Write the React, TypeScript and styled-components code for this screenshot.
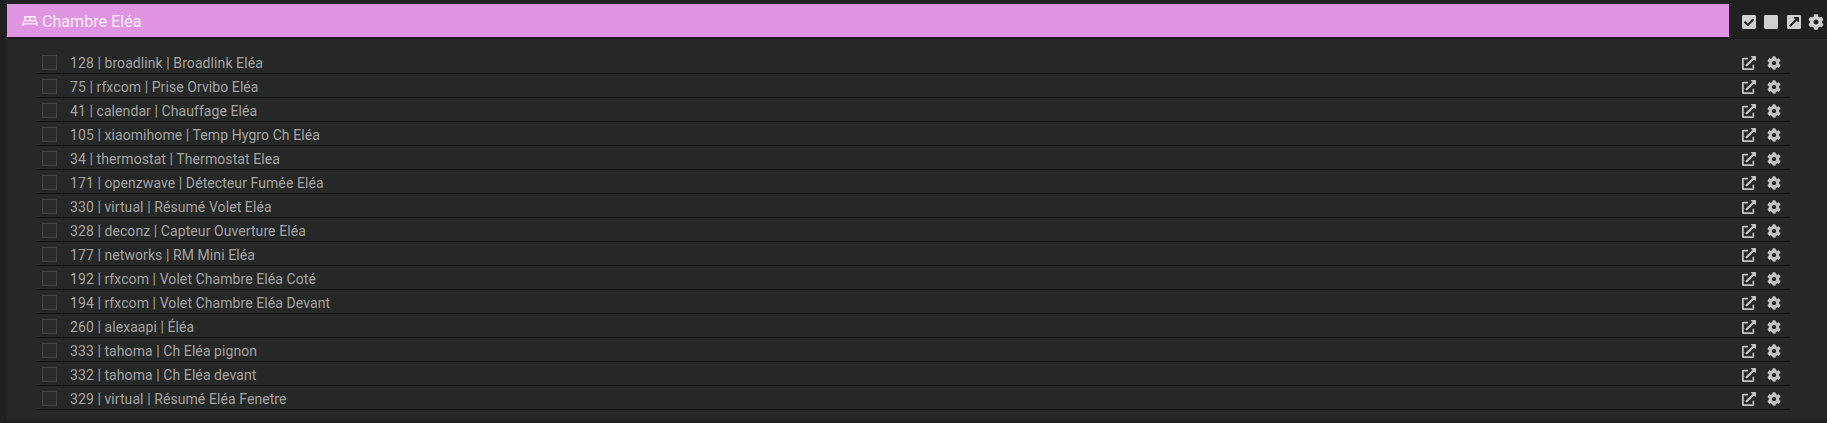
import styled, { createGlobalStyle } from "styled-components";
import { FaCheckSquare, FaCog, FaExternalLinkAlt, FaExternalLinkSquareAlt, FaSquare } from "react-icons/fa";

const eqLogics = [
  "128 | broadlink | Broadlink Eléa",
  "75 | rfxcom | Prise Orvibo Eléa",
  "41 | calendar | Chauffage Eléa",
  "105 | xiaomihome | Temp Hygro Ch Eléa",
  "34 | thermostat | Thermostat Elea",
  "171 | openzwave | Détecteur Fumée Eléa",
  "330 | virtual | Résumé Volet Eléa",
  "328 | deconz | Capteur Ouverture Eléa",
  "177 | networks | RM Mini Eléa",
  "192 | rfxcom | Volet Chambre Eléa Coté",
  "194 | rfxcom | Volet Chambre Eléa Devant",
  "260 | alexaapi | Éléa",
  "333 | tahoma | Ch Eléa pignon",
  "332 | tahoma | Ch Eléa devant",
  "329 | virtual | Résumé Eléa Fenetre",
];

function App() {
  return (
    <>
      <GlobalStyle />
      <Page>
        <HeaderRow>
          <Title>
            <BedIcon viewBox="0 0 16 12">
              <path
                d="M3 1h10a1 1 0 0 1 1 1v3l1.5 2.5V11h-1.6V9.6H2.1V11H.5V7.5L2 5V2a1 1 0 0 1 1-1zm.6 1.5V5h3.6V2.5zm5.2 0V5h3.6V2.5zM2 6.6v1.6h12V6.6z"
                fill="currentColor"
                fillRule="evenodd"
              />
            </BedIcon>
            Chambre Eléa
          </Title>
          <HeaderActions>
            <FaCheckSquare />
            <FaSquare />
            <FaExternalLinkSquareAlt />
            <FaCog />
          </HeaderActions>
        </HeaderRow>
        <Panel>
          <List>
            {eqLogics.map((item) => (
              <Row key={item}>
                <Check />
                <Label>{item}</Label>
                <RowActions>
                  <FaExternalLinkAlt />
                  <FaCog />
                </RowActions>
              </Row>
            ))}
          </List>
        </Panel>
      </Page>
    </>
  );
}

export default App;

const GlobalStyle = createGlobalStyle`
  html, body {
    margin: 0;
    background: #1f2020;
  }
`;

const Page = styled.div`
  width: 1827px;
  height: 423px;
  overflow: hidden;
  padding: 4px 0 0 7px;
  box-sizing: border-box;
  font-family: Roboto, sans-serif;
`;

const HeaderRow = styled.div`
  display: flex;
  align-items: center;
  height: 34px;
  border-bottom: 1px solid #191a1a;
`;

const Title = styled.div`
  width: 1722px;
  height: 34px;
  box-sizing: border-box;
  display: flex;
  align-items: center;
  gap: 4px;
  padding: 1px 0 0 15px;
  background: #e095e2;
  border-bottom: 1px solid #2e1430;
  color: #fbeefb;
  font-size: 16px;
  letter-spacing: 0.06px;
`;

const BedIcon = styled.svg`
  width: 16px;
  height: 12px;
`;

const HeaderActions = styled.div`
  display: flex;
  align-items: center;
  gap: 6px;
  margin-left: 12px;
  padding-top: 1px;
  color: #d0d0d0;
  font-size: 16px;
  line-height: 0;

  svg:nth-child(3) {
    margin-left: 1px;
  }
`;

const Panel = styled.div`
  height: 381px;
  padding: 11px 0 0 30px;
  box-sizing: border-box;
  background: #262727;
`;

const List = styled.div`
  width: 1753px;
`;

const Row = styled.div`
  display: flex;
  align-items: center;
  height: 24px;
  box-sizing: border-box;
  padding: 2px 0 0 5px;
  border-bottom: 1px solid #111;
`;

const Check = styled.span`
  width: 13px;
  height: 13px;
  border: 1px solid #424343;
  background: #2b2c2c;
`;

const Label = styled.span`
  margin-left: 13px;
  flex: 1;
  color: #a3a3a3;
  font-size: 14px;
  letter-spacing: 0.08px;
`;

const RowActions = styled.div`
  display: flex;
  align-items: center;
  gap: 11px;
  margin-right: 9px;
  color: #c4c4c4;
  font-size: 14px;
  line-height: 0;
`;
